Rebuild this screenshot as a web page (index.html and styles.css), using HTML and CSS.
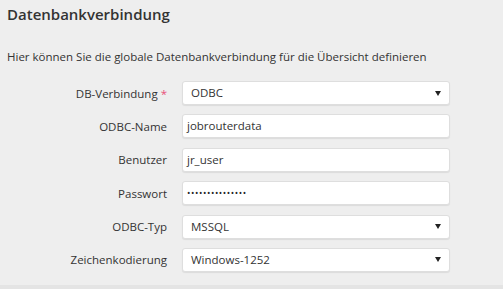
FILE: index.html
```html
<!DOCTYPE html>
<html lang="de">

<head>
    <meta charset="UTF-8">
    <title>Datenbankverbindung</title>
    <link rel="stylesheet" href="styles.css">
</head>

<body>
    <div class="panel">
        <h2>Datenbankverbindung</h2>
        <p class="intro">Hier können Sie die globale Datenbankverbindung für die Übersicht definieren</p>

        <!-- Verbindungsdaten -->
        <div class="form">
            <div class="form-row">
                <label for="db">DB-Verbindung <span class="req">*</span></label>
                <div class="field select">
                    <span>ODBC</span>
                    <i class="caret"></i>
                </div>
            </div>
            <div class="form-row">
                <label for="odbc">ODBC-Name</label>
                <div class="field">jobrouterdata</div>
            </div>
            <div class="form-row">
                <label for="user">Benutzer</label>
                <div class="field">jr_user</div>
            </div>
            <div class="form-row">
                <label for="pw">Passwort</label>
                <div class="field pw">•••••••••••••••</div>
            </div>
            <div class="form-row">
                <label for="typ">ODBC-Typ</label>
                <div class="field select">
                    <span>MSSQL</span>
                    <i class="caret"></i>
                </div>
            </div>
            <div class="form-row">
                <label for="enc">Zeichenkodierung</label>
                <div class="field select">
                    <span>Windows-1252</span>
                    <i class="caret"></i>
                </div>
            </div>
        </div>
    </div>
    <div class="footer"></div>
</body>

</html>
```

FILE: styles.css
```css
body {
    margin: 0;
    padding: 0;
    background-color: #eeeeee;
    font-family: "Open Sans", "Liberation Sans", sans-serif;
    color: #333;
}

.panel {
    padding: 0 7px;
    height: 285px;
    box-sizing: border-box;
}

h2 {
    margin: 0;
    padding-top: 3px;
    font-size: 15px;
    font-weight: 600;
    line-height: 22px;
}

.intro {
    margin: 0;
    padding-top: 23px;
    font-size: 11.5px;
    line-height: 17px;
}

.form {
    margin-top: 16px;
    display: flex;
    flex-direction: column;
    gap: 9.4px;
}

.form-row {
    display: flex;
    align-items: center;
    gap: 15px;
}

label {
    width: 160px;
    text-align: right;
    font-size: 11.5px;
}

.req {
    color: #e8507a;
}

.field {
    width: 268px;
    height: 24px;
    box-sizing: border-box;
    background: white;
    border: 1px solid #dedede;
    border-radius: 3px;
    box-shadow: 0 1px 1px rgba(0, 0, 0, 0.08);
    padding: 0 4px;
    font-size: 11.5px;
    line-height: 22px;
    color: #333;
}

.field.select {
    display: flex;
    justify-content: space-between;
    align-items: center;
    padding: 0 8px 0 8px;
}

.field.pw {
    font-size: 9px;
    letter-spacing: 0.6px;
    color: #222;
}

.caret {
    width: 0;
    height: 0;
    border-left: 3px solid transparent;
    border-right: 3px solid transparent;
    border-top: 5px solid #222;
}

.footer {
    height: 4px;
    background: #e4e4e4;
}
```
